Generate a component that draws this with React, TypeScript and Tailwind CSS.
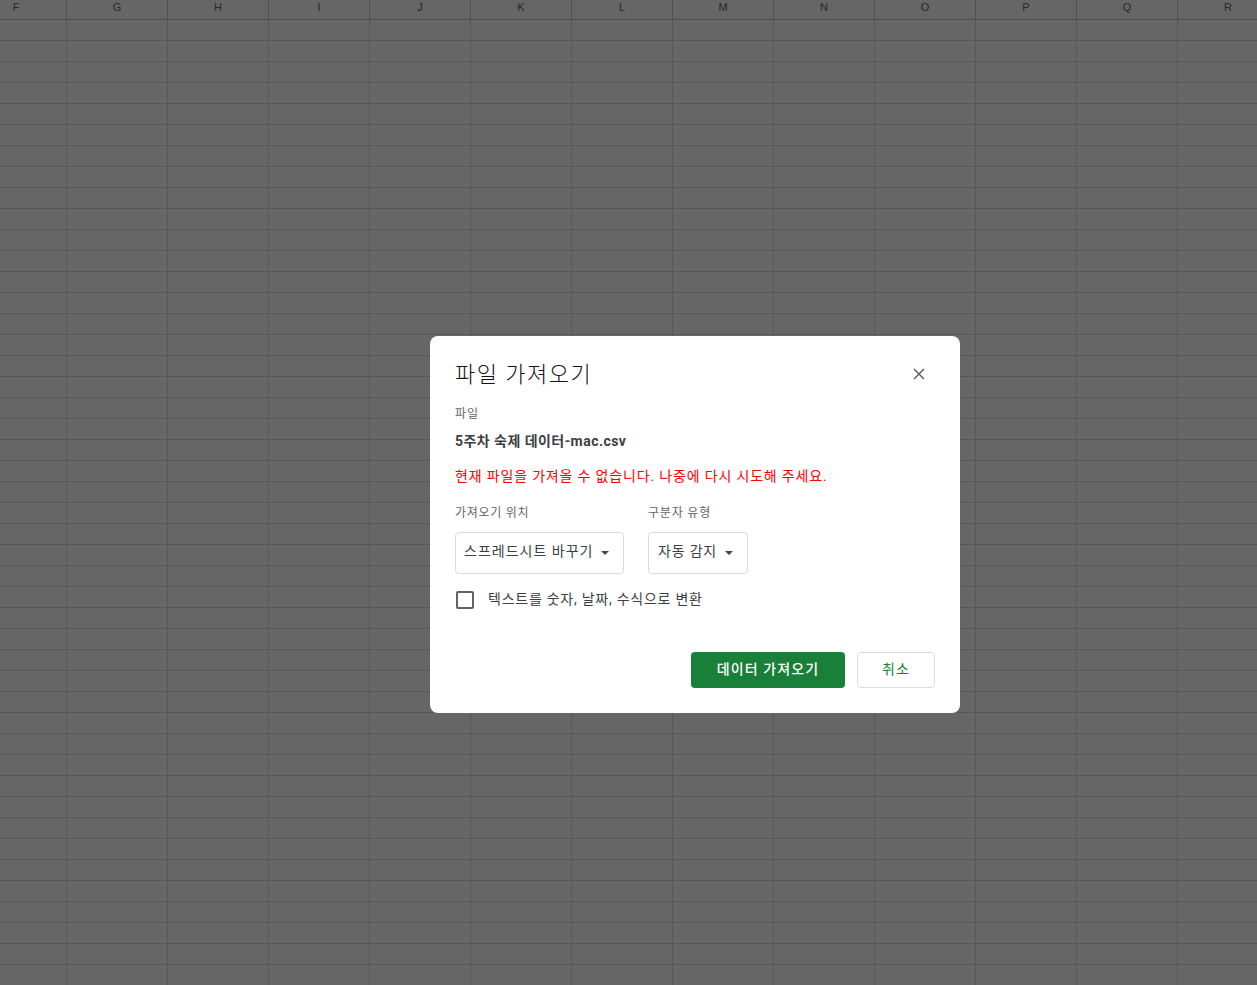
import React from "react";

const cols = ["F","G","H","I","J","K","L","M","N","O","P","Q","R"];
const rows = Array.from({ length: 46 }, (_, i) => i);

function Caret() {
  return (
    <svg width="8" height="4" viewBox="0 0 8 4" className="shrink-0" aria-hidden="true">
      <path d="M0 0h8L4 4z" fill="#444746" />
    </svg>
  );
}

function Select({ label, className, tracking }: { label: string; className: string; tracking: string }) {
  return (
    <div className={"h-[42px] flex items-center rounded-[4px] border border-[#dadce0] " + className}>
      <span className={"mb-[4px] text-[14px] leading-[20px] text-[#3c4043] whitespace-nowrap " + tracking}>{label}</span>
      <Caret />
    </div>
  );
}

export default function App() {
  return (
    <div className="relative w-[1257px] h-[985px] overflow-hidden bg-[#666666] font-['Roboto','Noto_Sans_CJK_KR',sans-serif]">
      <div className="flex h-[20px] ml-[-34px] border-b border-[#4f4f4f] font-['Liberation_Sans',sans-serif]">
        {cols.map((c) => (
          <div key={c} className="shrink-0 w-[101px] h-full flex items-center justify-center border-r border-[#4f4f4f] text-[11px] text-[#26282c] pb-[5px]">
            {c}
          </div>
        ))}
      </div>
      {rows.map((r) => (
        <div key={r} className="flex h-[21px] ml-[-34px] border-b border-[#585858]">
          {cols.map((c) => (
            <div key={c} className="shrink-0 w-[101px] h-full border-r border-[#585858]" />
          ))}
        </div>
      ))}

      <div className="absolute left-[430px] top-[336px] w-[530px] h-[377px] bg-white rounded-[8px] px-[25px] flex flex-col">
        <div className="flex items-start justify-between h-[56px] pt-[21px]">
          <h1 className="mt-[2px] text-[22px] leading-[32px] font-light text-[#111318] tracking-[1.5px]">파일 가져오기</h1>
          <svg width="12" height="12" viewBox="0 0 12 12" className="mr-[10px] mt-[11px]" aria-hidden="true">
            <path d="M1 1l10 10M11 1L1 11" fill="none" stroke="#5f6368" strokeWidth="1.5" />
          </svg>
        </div>
        <div className="mt-[13px] text-[12px] leading-[18px] text-[#5f6368] tracking-[1px]">파일</div>
        <div className="mt-[8px] text-[14px] leading-[20px] font-bold text-[#3c4043] tracking-[0.45px]">5주차 숙제 데이터-mac.csv</div>
        <div className="mt-[15px] text-[14px] leading-[20px] text-[#ff0000] tracking-[0.83px]">현재 파일을 가져올 수 없습니다. 나중에 다시 시도해 주세요.</div>
        <div className="mt-[18px] flex gap-[24px]">
          <div className="flex flex-col">
            <div className="text-[12px] leading-[18px] text-[#5f6368] tracking-[0.7px]">가져오기 위치</div>
            <Select label="스프레드시트 바꾸기" tracking="tracking-[1px]" className="mt-[10px] w-[169px] pl-[8px] gap-[8px]" />
          </div>
          <div className="flex flex-col">
            <div className="text-[12px] leading-[18px] text-[#5f6368] tracking-[0.8px]">구분자 유형</div>
            <Select label="자동 감지" tracking="tracking-[0.8px]" className="mt-[10px] w-[100px] pl-[9px] gap-[8px]" />
          </div>
        </div>
        <div className="mt-[16px] flex items-center h-[20px]">
          <div className="ml-[1px] w-[18px] h-[18px] rounded-[2px] border-2 border-[#5f6368]" />
          <span className="ml-[14px] mb-[2px] text-[14px] leading-[20px] text-[#3c4043] tracking-[0.75px]">텍스트를 숫자, 날짜, 수식으로 변환</span>
        </div>
        <div className="mt-auto mb-[25px] flex justify-end gap-[12px]">
          <button className="w-[154px] h-[36px] pb-[2px] rounded-[4px] bg-[#188038] text-white text-[14px] font-medium tracking-[1.1px]">데이터 가져오기</button>
          <button className="w-[78px] h-[36px] pb-[2px] rounded-[4px] bg-white border border-[#dadce0] text-[#188038] text-[14px] tracking-[1px]">취소</button>
        </div>
      </div>
    </div>
  );
}
